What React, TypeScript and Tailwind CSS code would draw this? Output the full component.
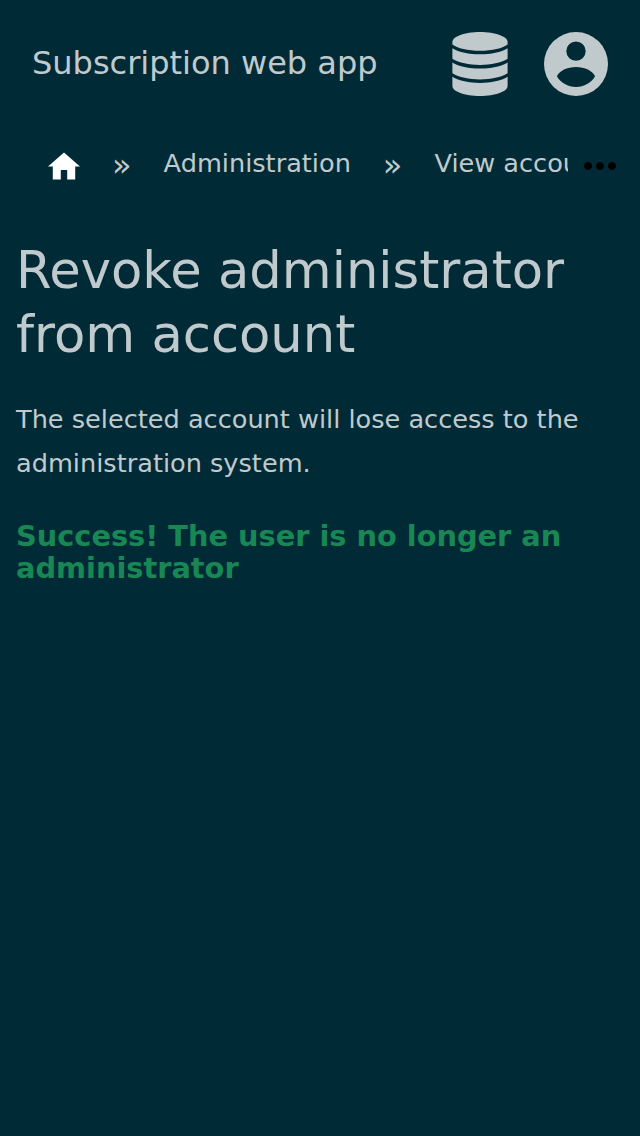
import React from "react";
import { MdMoreHoriz } from "react-icons/md";

function DatabaseIcon() {
  return (
    <svg viewBox="0 0 56 64" className="h-16 w-14 shrink-0" fill="currentColor" aria-hidden="true">
      <path d="M0.4 10C0.4 4.500 12.700 0 28 0s27.600 4.500 27.600 10v2.500C51 16.300 40 18.800 28 18.800S5 16.300 0.400 12.500z" />
      <path d="M0.400 16.300C7 20.300 17 22.300 28 22.300s21-2 27.600-6v10.500C49 30.800 39 33 28 33S7 30.800 0.400 26.800z" />
      <path d="M0.400 30.600C7 34.600 17 36.600 28 36.600s21-2 27.600-6v10.700C49 45.300 39 47.500 28 47.500S7 45.300 0.400 41.300z" />
      <path d="M0.400 44.800C7 48.800 17 51 28 51s21-2.200 27.600-6.200V54C55.600 59.500 43.300 64 28 64S0.400 59.500 0.400 54z" />
    </svg>
  );
}

function AccountIcon() {
  return (
    <svg viewBox="0 0 64 64" className="size-16 shrink-0" fill="currentColor" aria-hidden="true">
      <path
        fillRule="evenodd"
        d="M32 0a32 32 0 1 0 0 64a32 32 0 0 0 0-64zM32 9.400a9.700 9.700 0 1 1 0 19.400a9.700 9.700 0 0 1 0-19.400zM12.900 44.300C15.500 38.800 23 35 32 35s16.500 3.800 19.100 9.300C47.200 51 40.100 55 32 55s-15.200-4-19.100-10.700z"
      />
    </svg>
  );
}

function HomeIcon() {
  return (
    <svg viewBox="0 0 32 28" className="mt-1 h-7 w-8 shrink-0 text-white" fill="currentColor" aria-hidden="true">
      <path d="M16 0.500L0 14.400h4.800v13.100h8V18h6.400v9.500h8V14.400H32z" />
    </svg>
  );
}

export default function App() {
  return (
    <div className="min-h-[1136px] w-[640px] overflow-hidden bg-[#002b36] font-['DejaVu_Sans',sans-serif] text-[#c0cacd]">
      <header className="flex h-32 items-center justify-between px-8">
        <div className="-mt-0.5 text-[32px] leading-[48px] whitespace-nowrap">Subscription web app</div>
        <div className="flex items-center gap-9">
          <DatabaseIcon />
          <AccountIcon />
        </div>
      </header>
      <nav className="flex h-[72px] items-center">
        <div className="flex w-[568px] items-center overflow-hidden pl-12 whitespace-nowrap">
          <HomeIcon />
          <span className="ml-8 pt-0.5 text-[32px] leading-10">»</span>
          <span className="ml-8 pb-0.5 text-[25.6px] leading-10">Administration</span>
          <span className="ml-8 pt-0.5 text-[32px] leading-10">»</span>
          <span className="ml-8 pb-0.5 text-[25.6px] leading-10">View account</span>
        </div>
        <MdMoreHoriz className="mt-1 ml-2 size-12 shrink-0 text-black" />
      </nav>
      <main className="px-4 pt-[38px]">
        <h1 className="text-[51.2px] leading-[64px]">Revoke administrator from account</h1>
        <p className="mt-[31px] text-[25.6px] leading-[44px]">The selected account will lose access to the administration system.</p>
        <h2 className="mt-[35px] text-[28.8px] leading-8 font-bold text-[#198754]">Success! The user is no longer an administrator</h2>
      </main>
    </div>
  );
}
